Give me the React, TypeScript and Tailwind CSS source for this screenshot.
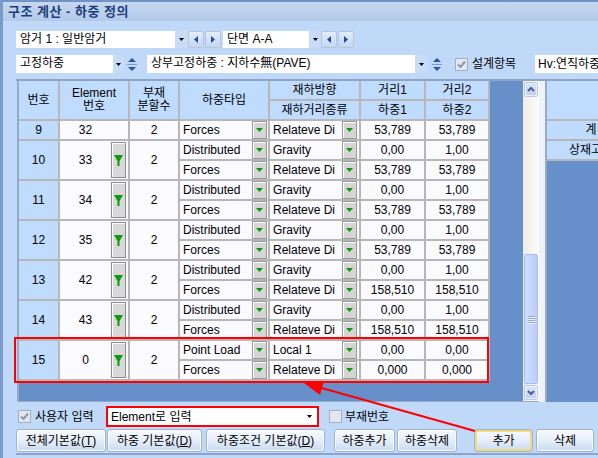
import React from "react";

type Load = { kind: string; dir: string; d1: string; d2: string };
type Member = { no: number; element: string; parts: string; loads: Load[] };

const forces = (v: string): Load => ({ kind: "Forces", dir: "Relateve Di", d1: v, d2: v });
const gravity: Load = { kind: "Distributed", dir: "Gravity", d1: "0,00", d2: "1,00" };

const members: Member[] = [
  { no: 9, element: "32", parts: "2", loads: [forces("53,789")] },
  { no: 10, element: "33", parts: "2", loads: [gravity, forces("53,789")] },
  { no: 11, element: "34", parts: "2", loads: [gravity, forces("53,789")] },
  { no: 12, element: "35", parts: "2", loads: [gravity, forces("53,789")] },
  { no: 13, element: "42", parts: "2", loads: [gravity, forces("158,510")] },
  { no: 14, element: "43", parts: "2", loads: [gravity, forces("158,510")] },
  {
    no: 15,
    element: "0",
    parts: "2",
    loads: [{ kind: "Point Load", dir: "Local 1", d1: "0,00", d2: "0,00" }, forces("0,000")],
  },
];

const font = "[font-family:'Liberation_Sans','Noto_Sans_CJK_KR',sans-serif]";

function ComboArrow() {
  return (
    <svg width="5" height="3" viewBox="0 0 5 3">
      <path d="M0 0h5L2.5 3z" fill="#000" />
    </svg>
  );
}

function Combo({ text, width, arrowW = 13 }: { text: string; width: number; arrowW?: number }) {
  return (
    <div className="flex h-full shrink-0 bg-white" style={{ width }}>
      <span className="flex-1 truncate pl-[4px] leading-[17px]">{text}</span>
      <span className="flex items-center justify-center bg-[#c9dcf7]" style={{ width: arrowW }}>
        <ComboArrow />
      </span>
    </div>
  );
}

function NavButton({ dir, className = "" }: { dir: "left" | "right"; className?: string }) {
  return (
    <span
      className={`flex h-full w-[16px] shrink-0 items-center justify-center rounded-[2px] border border-[#b2c6e4] bg-gradient-to-b from-[#e4edf9] to-[#c3d6f1] ${className}`}
    >
      <svg width="4" height="7" viewBox="0 0 4 7">
        <path d={dir === "left" ? "M4 0v7L0 3.5z" : "M0 0v7l4-3.5z"} fill="#1f4b98" />
      </svg>
    </span>
  );
}

function Spinner({ className = "" }: { className?: string }) {
  return (
    <span className={`flex h-full w-[16px] shrink-0 flex-col items-center justify-center gap-[2px] ${className}`}>
      <svg width="8" height="4" viewBox="0 0 8 4">
        <path d="M0 4h8L4 0z" fill="#2557a8" />
      </svg>
      <span className="h-px w-[10px] bg-[#7f9bc9]" />
      <svg width="8" height="4" viewBox="0 0 8 4">
        <path d="M0 0h8L4 4z" fill="#2557a8" />
      </svg>
    </span>
  );
}

function CheckBox({ checked }: { checked?: boolean }) {
  return (
    <span className="flex h-[13px] w-[13px] shrink-0 items-center justify-center border border-[#a2afc2] bg-[#e4e8ee]">
      {checked && (
        <svg width="9" height="9" viewBox="0 0 9 9">
          <path d="M1 4.5l2.5 2.5L8 1.5" fill="none" stroke="#8b98ab" strokeWidth="2" />
        </svg>
      )}
    </span>
  );
}

// grey drop button inside a grid cell
function CellPick({ className = "" }: { className?: string }) {
  return (
    <span
      className={`flex h-[18px] w-[15px] shrink-0 items-center justify-center border border-[#9a9a9a] bg-[#d5d5d5] shadow-[inset_1px_1px_0_#ffffff] ${className}`}
    >
      <svg width="7" height="4" viewBox="0 0 7 4">
        <path d="M0 0h7L3.5 4z" fill="#0b9b0b" />
      </svg>
    </span>
  );
}

function ElementPick() {
  return (
    <span className="my-px mr-[2px] flex w-[15px] shrink-0 items-center justify-center border border-[#8e8e8e] bg-[#d8d8d8] shadow-[inset_1px_1px_0_#ffffff]">
      <svg width="9" height="11" viewBox="0 0 9 11">
        <path d="M0 0h9L5.5 6v5h-2V6z" fill="#0b9b0b" />
      </svg>
    </span>
  );
}

function Head({ children, tall }: { children: React.ReactNode; tall?: boolean }) {
  return (
    <div
      className={`flex items-center justify-center bg-[#bfdbfe] text-center leading-[13px] ${tall ? "row-span-2" : ""}`}
    >
      {children}
    </div>
  );
}

function ScrollButton({ up }: { up?: boolean }) {
  return (
    <span className="mx-px flex h-[15px] items-center justify-center rounded-[2px] border border-[#b5c8f3] bg-gradient-to-b from-[#dbe5fd] to-[#bccdf7] shadow-[inset_0_0_0_1px_#eef3ff]">
      <svg width="8" height="5" viewBox="0 0 8 5">
        <path d={up ? "M1 4l3-3 3 3" : "M1 1l3 3 3-3"} fill="none" stroke="#4d6185" strokeWidth="2" />
      </svg>
    </span>
  );
}

function ScrollBar() {
  return (
    <div className="flex w-[16px] shrink-0 flex-col bg-gradient-to-r from-[#efeee7] to-[#fcfcf9] py-px">
      <ScrollButton up />
      <div className="flex-1" />
      <div className="mx-px mb-px flex h-[130px] flex-col items-center justify-center gap-px rounded-[2px] border border-[#a8bcef] bg-gradient-to-r from-[#d0ddfd] to-[#bacdfa]">
        {[0, 1, 2, 3].map((i) => (
          <span key={i} className="h-px w-[7px] bg-[#8ea8e6] shadow-[0_1px_0_#eef3ff]" />
        ))}
      </div>
      <ScrollButton />
    </div>
  );
}

function Button({
  children,
  width,
  className = "",
  active,
}: {
  children: React.ReactNode;
  width: number;
  className?: string;
  active?: boolean;
}) {
  return (
    <button
      className={`flex h-full shrink-0 items-center justify-center rounded-[3px] border border-[#9cb3d6] bg-gradient-to-b from-[#f7faff] via-[#e6eefa] to-[#c9daf1] ${
        active ? "shadow-[inset_0_0_0_2px_#f6d97c]" : "shadow-[inset_0_0_0_1px_#ffffff]"
      } ${className}`}
      style={{ width }}
    >
      {children}
    </button>
  );
}

function LoadGrid() {
  return (
    <div className="grid w-fit grid-cols-[39px_68px_48px_88px_89px_63px_62px] auto-rows-[18px] gap-[2px] bg-[#b7b7b7] pr-[2px] pb-[2px]">
      <Head tall>번호</Head>
      <Head tall>
        Element
        <br />
        번호
      </Head>
      <Head tall>
        부재
        <br />
        분할수
      </Head>
      <Head tall>하중타입</Head>
      <Head>재하방향</Head>
      <Head>거리1</Head>
      <Head>거리2</Head>
      <Head>재하거리종류</Head>
      <Head>하중1</Head>
      <Head>하중2</Head>

      {members.map((m) => {
        const span = m.loads.length > 1 ? "row-span-2" : "";
        return (
          <React.Fragment key={m.no}>
            <div className={`${span} flex items-center justify-center bg-[#bfdbfe]`}>{m.no}</div>
            <div className={`${span} flex items-stretch bg-[#fbfaff]`}>
              <span className="flex flex-1 items-center justify-center">{m.element}</span>
              {m.loads.length > 1 ? <ElementPick /> : <span className="w-[17px]" />}
            </div>
            <div className={`${span} flex items-center justify-center bg-[#fbfaff]`}>{m.parts}</div>
            {m.loads.map((l, i) => (
              <React.Fragment key={i}>
                <div className="flex items-center bg-[#fbfaff] pl-[3px]">
                  <span className="flex-1 overflow-hidden whitespace-nowrap">{l.kind}</span>
                  <CellPick className="mr-px" />
                </div>
                <div className="flex items-center bg-[#fbfaff] pl-[3px]">
                  <span className="flex-1 overflow-hidden whitespace-nowrap">{l.dir}</span>
                  <CellPick className="mr-[2px]" />
                </div>
                <div className="flex items-center justify-center bg-[#fbfaff]">{l.d1}</div>
                <div className="flex items-center justify-center bg-[#fbfaff]">{l.d2}</div>
              </React.Fragment>
            ))}
          </React.Fragment>
        );
      })}
    </div>
  );
}

export default function App() {
  return (
    <div className={`relative h-[458px] w-[598px] overflow-hidden text-[12px] text-black ${font}`}>
      <div className="flex h-full flex-col border-l-[3px] border-[#7b9acb] bg-[#c1d9f9]">
        {/* title bar */}
        <div className="flex h-[21px] shrink-0 items-center border-t-2 border-[#7393c6] bg-gradient-to-b from-[#c6d8ef] to-[#b4cae8] pl-[5px]">
          <span className="text-[13px] font-bold tracking-[0.5px] text-[#1b3f7d]">구조 계산 - 하중 정의</span>
        </div>

        <div className="flex flex-1 flex-col pl-[13px]">
          {/* section selectors */}
          <div className="mt-[10px] flex h-[17px] items-center">
            <Combo text="암거 1 : 일반암거" width={172} />
            <NavButton dir="left" />
            <NavButton dir="right" className="ml-px" />
            <span className="ml-[2px] h-full">
              <Combo text="단면 A-A" width={98} arrowW={12} />
            </span>
            <NavButton dir="left" />
            <NavButton dir="right" className="ml-px" />
          </div>

          {/* load case selectors */}
          <div className="mt-[7px] flex h-[18px] items-center">
            <Combo text="고정하중" width={108} arrowW={11} />
            <Spinner />
            <span className="ml-[7px] h-full">
              <Combo text="상부고정하중 : 지하수無(PAVE)" width={281} />
            </span>
            <Spinner className="ml-px" />
            <span className="ml-[10px]">
              <CheckBox checked />
            </span>
            <span className="ml-[4px] w-[48px] shrink-0">설계항목</span>
            <span className="ml-[15px] h-full w-[120px] shrink-0 bg-white pl-[3px] leading-[18px]">Hv:연직하중</span>
          </div>

          {/* grids */}
          <div className="mt-[6px] flex h-[323px] shrink-0 border-t-2 border-[#8ea3c6]">
            <div className="ml-px flex h-[321px] border-l-2 border-b border-[#96a9c6] bg-[#6790cb]">
              <div className="w-[504px]">
                <LoadGrid />
              </div>
              <ScrollBar />
            </div>
            <div className="w-[6px] shrink-0 bg-[#eef3fb]" />
            <div className="flex-1 border-l-2 border-[#96a9c6] bg-[#6790cb]">
              <div className="grid w-fit grid-cols-[88px] auto-rows-[18px] gap-[2px] bg-[#b7b7b7] pb-[2px]">
                <Head tall>{""}</Head>
                <Head>계</Head>
                <Head>상재고정</Head>
              </div>
            </div>
          </div>

          {/* input mode */}
          <div className="mt-[4px] flex h-[21px] items-center">
            <span className="ml-[2px]">
              <CheckBox checked />
            </span>
            <span className="ml-[4px] w-[71px] shrink-0">사용자 입력</span>
            <div className="flex h-full w-[213px] shrink-0 items-center border-2 border-[#ff0000] bg-white">
              <span className="flex-1 pl-[3px]">Element로 입력</span>
              <span className="mr-[5px]">
                <ComboArrow />
              </span>
            </div>
            <span className="ml-[10px]">
              <CheckBox />
            </span>
            <span className="ml-[3px]">부재번호</span>
          </div>

          {/* actions */}
          <div className="mt-[2px] flex h-[23px] items-center">
            <Button width={90}>
              전체기본값(<span className="underline">T</span>)
            </Button>
            <Button width={95} className="ml-px">
              하중 기본값(<span className="underline">D</span>)
            </Button>
            <Button width={119} className="ml-[4px]">
              하중조건 기본값(<span className="underline">D</span>)
            </Button>
            <Button width={61} className="ml-[9px]">
              하중추가
            </Button>
            <Button width={60} className="ml-[2px]">
              하중삭제
            </Button>
            <Button width={59} className="ml-[17px]" active>
              추가
            </Button>
            <Button width={58} className="ml-[3px]">
              삭제
            </Button>
          </div>
          <div className="mt-px border-t-2 border-[#8ba5cf]" />
        </div>
      </div>

      {/* markup over the form */}
      <div className="pointer-events-none absolute left-[14px] top-[337px] h-[46px] w-[475px] border-2 border-[#ff0000]" />
      <svg className="pointer-events-none absolute left-0 top-0" width="598" height="458" viewBox="0 0 598 458">
        <line x1="318" y1="387" x2="475" y2="431" stroke="#ff0000" strokeWidth="2" />
        <path d="M304 383L324 381L320 395z" fill="#ff0000" />
      </svg>
    </div>
  );
}
